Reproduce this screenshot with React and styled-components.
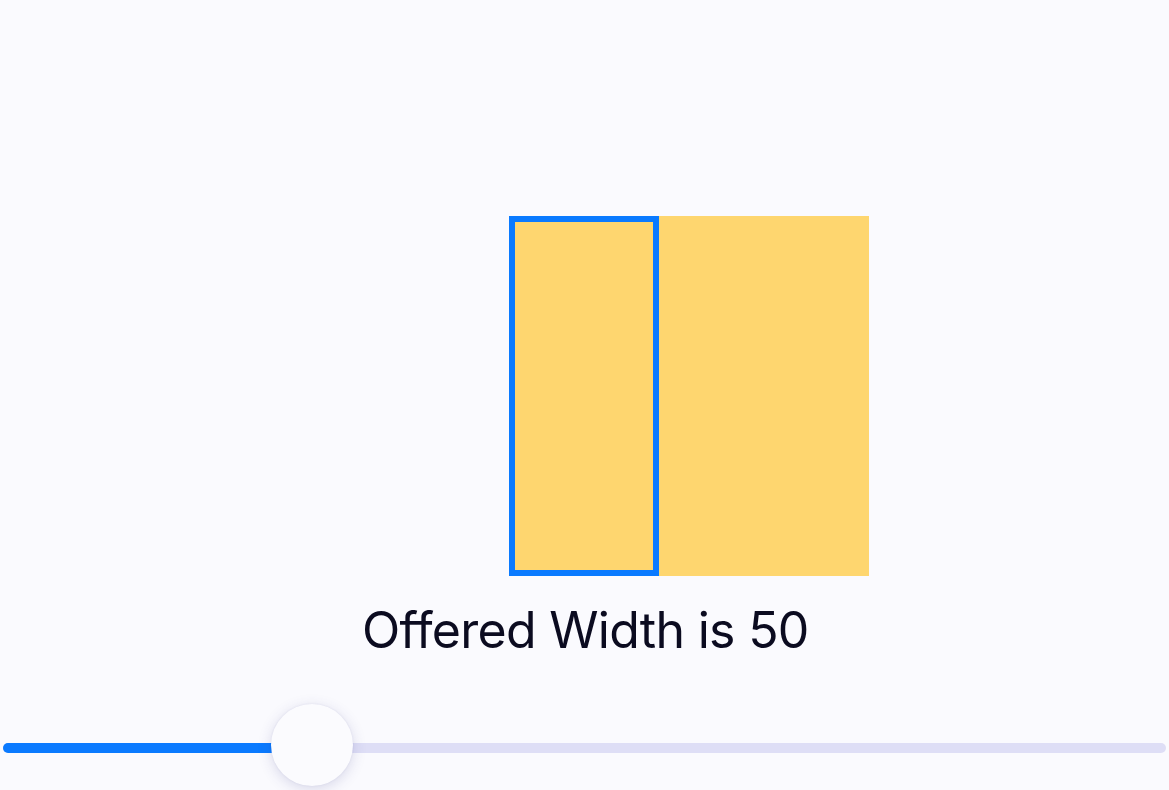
import React from 'react';
import styled, { createGlobalStyle } from 'styled-components';

const Global = createGlobalStyle`
    html, body {
        margin: 0;
        padding: 0;
        background: #fafafe;
    }
`;

const Page = styled.div`
    width: 1169px;
    height: 790px;
    display: flex;
    flex-direction: column;
    background: #fafafe;
    font-family: Inter, "Noto Sans", sans-serif;
    overflow: hidden;
`;

const Stage = styled.div`
    padding-top: 216px;
    padding-left: 509px;
    display: flex;
`;

const Proposal = styled.div`
    width: 360px;
    height: 360px;
    background: #fed66f;
    display: flex;
`;

const Offered = styled.div`
    box-sizing: border-box;
    width: ${p => p.width * 3}px;
    height: 100%;
    border: 6px solid #0a7aff;
`;

const Caption = styled.p`
    margin: 24px 0 0 362px;
    font-size: 50px;
    line-height: 60px;
    letter-spacing: -0.7px;
    color: #0b0b20;
    white-space: nowrap;
`;

const SliderWrap = styled.div`
    position: relative;
    margin: 83px 3px 0 3px;
    height: 10px;
    border-radius: 5px;
    background: #dedef6;
`;

const Fill = styled.div`
    height: 100%;
    border-radius: 5px 0 0 5px;
    background: #0a7aff;
`;

const Thumb = styled.div`
    position: absolute;
    top: 50%;
    width: 82px;
    height: 82px;
    margin-left: -41px;
    margin-top: -44px;
    border-radius: 50%;
    background: #fbfbfe;
    box-shadow: 0 3px 14px rgba(60, 60, 140, 0.18), 0 0 2px rgba(60, 60, 140, 0.1);
`;

function App() {
    const offered = 50;
    return (
        <Page>
            <Global />
            <Stage>
                <Proposal>
                    <Offered width={offered} />
                </Proposal>
            </Stage>
            <Caption>Offered Width is {offered}</Caption>
            <SliderWrap>
                <Fill style={{ width: 309 }} />
                <Thumb style={{ left: 309 }} />
            </SliderWrap>
        </Page>
    );
}

export default App;
